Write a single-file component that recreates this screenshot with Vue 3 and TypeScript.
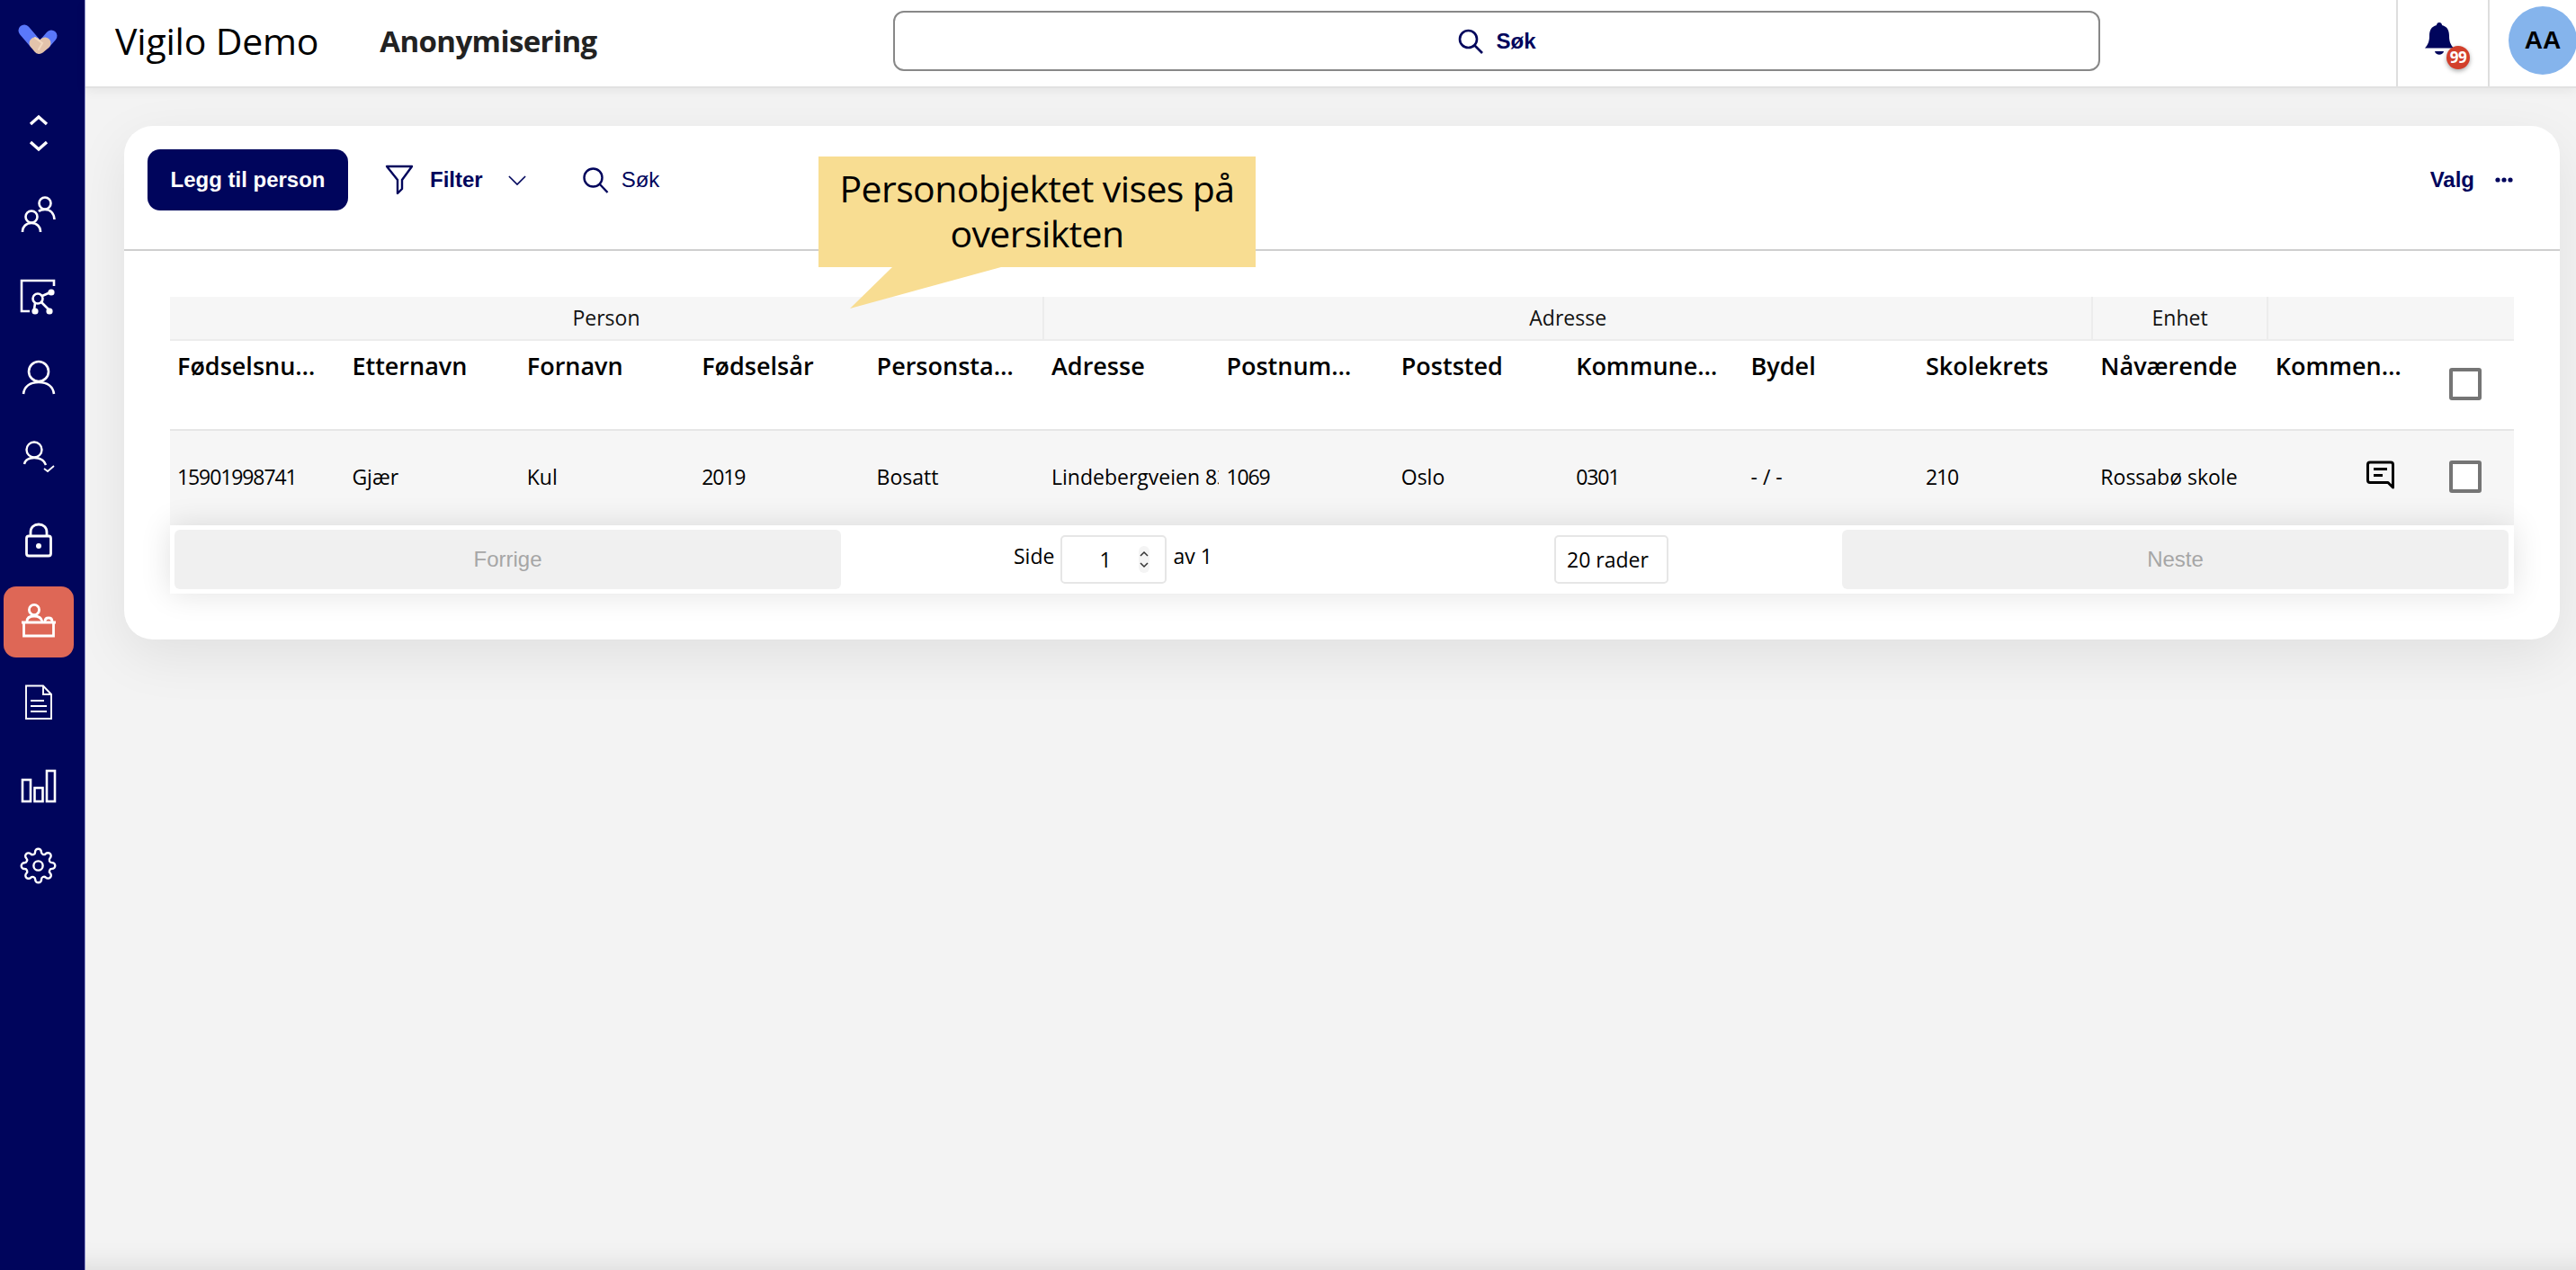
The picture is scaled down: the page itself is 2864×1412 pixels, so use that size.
<script setup lang="ts">
const groups = [
  { label: 'Person', span: 5 },
  { label: 'Adresse', span: 6 },
  { label: 'Enhet', span: 1 },
  { label: '', span: 2 },
]

const columns = [
  'Fødselsnummer',
  'Etternavn',
  'Fornavn',
  'Fødselsår',
  'Personstatus',
  'Adresse',
  'Postnummer',
  'Poststed',
  'Kommunenummer',
  'Bydel',
  'Skolekrets',
  'Nåværende',
  'Kommentar',
]

const row = [
  '15901998741',
  'Gjær',
  'Kul',
  '2019',
  'Bosatt',
  'Lindebergveien 83',
  '1069',
  'Oslo',
  '0301',
  '- / -',
  '210',
  'Rossabø skole',
]

const isNumber = (v: string) => /^\d+$/.test(v)
</script>

<template>
  <div class="page">
    <aside class="sidebar">
      <div class="logo">
        <svg width="48" height="40" viewBox="0 0 48 40" fill="none" stroke-linecap="round">
          <path d="M8 8 L20 22" stroke="#5a78fa" stroke-width="13" />
          <path d="M38 14 L31 22" stroke="#5a78fa" stroke-width="13" />
          <path d="M20 22 L24.500 27.500 L31 22" stroke="#e3c3ab" stroke-width="13" stroke-linejoin="round" />
          <path d="M20 16 L28 22 L24 29" stroke="#f3d9c0" stroke-width="2" />
        </svg>
      </div>
      <div class="updown">
        <svg width="24" height="42" viewBox="0 0 24 42" fill="none" stroke="#fff" stroke-width="3.4">
          <path d="M3 11 L12 3 L21 11" />
          <path d="M3 31 L12 39 L21 31" />
        </svg>
      </div>
      <nav class="menu">
        <a class="item">
          <svg viewBox="0 0 44 44" fill="none" stroke="#fff" stroke-width="2.6">
            <circle cx="29" cy="9" r="6.5" />
            <path d="M22 18 C24 16 26 16 29 16 C35 16 39 20 39.5 27" />
            <circle cx="14" cy="24" r="6.5" />
            <path d="M4 41 C4 35 8 31 14 31 C20 31 24 35 24 41" />
          </svg>
        </a>
        <a class="item">
          <svg viewBox="0 0 44 44" fill="none" stroke="#fff" stroke-width="2.6">
            <path d="M39 10 V4 H3 V38 H12" />
            <circle cx="21" cy="24" r="5.5" />
            <path d="M26 21 L35 17 M18 29 L17 36 M25 28 L33 36" />
            <g fill="#fff" stroke="none">
              <circle cx="36" cy="17" r="3.6" />
              <circle cx="18" cy="38" r="3.6" />
              <circle cx="34" cy="38" r="3.6" />
            </g>
          </svg>
        </a>
        <a class="item">
          <svg viewBox="0 0 44 44" fill="none" stroke="#fff" stroke-width="2.6">
            <circle cx="22" cy="15" r="11" />
            <path d="M5 40 C6 32 12 27 22 27 C32 27 38 32 39 40" />
          </svg>
        </a>
        <a class="item">
          <svg viewBox="0 0 44 44" fill="none" stroke="#fff" stroke-width="2.4">
            <circle cx="17" cy="12" r="8.5" />
            <path d="M6 28 C7 23 11 21 17 21 C23 21 28 23 30 29" />
            <path d="M28 33 L32 36 L39 30" stroke-width="1.8" />
          </svg>
        </a>
        <a class="item">
          <svg viewBox="0 0 44 44" fill="none" stroke="#fff" stroke-width="2.8">
            <rect x="8.5" y="17" width="27" height="22" rx="2.5" />
            <path d="M13 17 V13 C13 7 17 4 22 4 C27 4 31 7 31 13 V17" />
            <circle cx="22" cy="28" r="3" fill="#fff" stroke="none" />
          </svg>
        </a>
        <a class="item active">
          <svg viewBox="0 0 44 44" fill="none" stroke="#fff" stroke-width="2.8">
            <circle cx="17" cy="9" r="5.6" />
            <path d="M9 22 C9 18 12 16 17 16 C22 16 25 18 26 22" />
            <path d="M29 22 C29 19 31 18 33 18 C35 18 37 19 37 22" />
            <path d="M3 23 H41" />
            <path d="M5.500 23 V38 H38.500 V23" />
          </svg>
        </a>
        <a class="item">
          <svg viewBox="0 0 44 44" fill="none" stroke="#fff" stroke-width="1.9">
            <path d="M8 3.500 H27 L36 13 V40 H8 Z" />
            <path d="M27 3.500 V13 H36" />
            <path d="M13 20 H28 M13 26 H31 M13 32 H31" />
          </svg>
        </a>
        <a class="item">
          <svg viewBox="0 0 44 44" fill="none" stroke="#fff" stroke-width="2.6">
            <rect x="4" y="17" width="9" height="24" />
            <rect x="17.500" y="26" width="9" height="15" />
            <rect x="31" y="7" width="9" height="34" />
          </svg>
        </a>
        <a class="item">
          <svg viewBox="0 0 24 24" fill="none" stroke="#fff" stroke-width="1.4" class="gear">
            <circle cx="12" cy="12" r="3" />
            <path
              d="M19.400 15a1.650 1.650 0 0 0 .33 1.820l.06.06a2 2 0 0 1 0 2.830 2 2 0 0 1-2.830 0l-.06-.06a1.650 1.650 0 0 0-1.820-.33 1.650 1.650 0 0 0-1 1.510V21a2 2 0 0 1-2 2 2 2 0 0 1-2-2v-.09A1.650 1.650 0 0 0 9 19.400a1.650 1.650 0 0 0-1.820.33l-.06.06a2 2 0 0 1-2.830 0 2 2 0 0 1 0-2.830l.06-.06a1.650 1.650 0 0 0 .33-1.820 1.650 1.650 0 0 0-1.510-1H3a2 2 0 0 1-2-2 2 2 0 0 1 2-2h.09A1.650 1.650 0 0 0 4.600 9a1.650 1.650 0 0 0-.33-1.820l-.06-.06a2 2 0 0 1 0-2.830 2 2 0 0 1 2.830 0l.06.06a1.650 1.650 0 0 0 1.820.33H9a1.650 1.650 0 0 0 1-1.510V3a2 2 0 0 1 2-2 2 2 0 0 1 2 2v.09a1.650 1.650 0 0 0 1 1.510 1.650 1.650 0 0 0 1.820-.33l.06-.06a2 2 0 0 1 2.830 0 2 2 0 0 1 0 2.830l-.06.06a1.650 1.650 0 0 0-.33 1.820V9a1.650 1.650 0 0 0 1.510 1H21a2 2 0 0 1 2 2 2 2 0 0 1-2 2h-.09a1.650 1.650 0 0 0-1.510 1z"
            />
          </svg>
        </a>
      </nav>
    </aside>

    <div class="main">
      <header class="topbar">
        <div class="titles">
          <span class="brand">Vigilo Demo</span>
          <span class="section">Anonymisering</span>
        </div>
        <button class="global-search">
          <svg width="30" height="30" viewBox="0 0 30 30" fill="none" stroke="#00055c" stroke-width="2.6">
            <circle cx="12.500" cy="12.500" r="9.500" />
            <path d="M19.500 19.500 L28 28" />
          </svg>
          <span>Søk</span>
        </button>
        <div class="bell-cell">
          <div class="bell">
            <svg width="34" height="40" viewBox="0 0 34 40" fill="#00055c">
              <path d="M17 1 C19 1 20 2.500 20 4 C26 5.500 28 10 28 16 C28 23 30 26 33 29.500 H1 C4 26 6 23 6 16 C6 10 8 5.500 14 4 C14 2.500 15 1 17 1 Z" />
              <path d="M12 33 H22 C21 38 13 38 12 33 Z" />
            </svg>
            <span class="badge">99</span>
          </div>
        </div>
        <div class="avatar-cell">
          <span class="avatar">AA</span>
        </div>
      </header>

      <main class="content">
        <section class="card">
          <div class="toolbar">
            <button class="add">Legg til person</button>
            <button class="tool filter">
              <svg width="32" height="34" viewBox="0 0 32 34" fill="none" stroke="#00055c" stroke-width="2.4" stroke-linejoin="round">
                <path d="M2 2 H30 L19 17 V27 L14 32 V17 Z" />
              </svg>
              <strong>Filter</strong>
              <svg class="chev" width="20" height="11" viewBox="0 0 22 12" fill="none" stroke="#00055c" stroke-width="1.8">
                <path d="M1 1 L11 11 L21 1" />
              </svg>
            </button>
            <button class="tool find">
              <svg width="30" height="30" viewBox="0 0 30 30" fill="none" stroke="#00055c" stroke-width="2.4">
                <circle cx="12.500" cy="12.500" r="10" />
                <path d="M19.500 19.500 L28.500 29" />
              </svg>
              <span>Søk</span>
            </button>
            <button class="tool options">
              <strong>Valg</strong>
              <svg width="20" height="6" viewBox="0 0 20 6" fill="#00055c">
                <circle cx="3" cy="3" r="2.600" />
                <circle cx="10" cy="3" r="2.600" />
                <circle cx="17" cy="3" r="2.600" />
              </svg>
            </button>
          </div>

          <div class="table-wrap">
            <table class="grid">
              <colgroup>
                <col v-for="c in columns" :key="c" class="col" />
                <col class="col-check" />
              </colgroup>
              <thead>
                <tr class="group-row">
                  <th v-for="g in groups" :key="g.label" :colspan="g.span">{{ g.label }}</th>
                </tr>
                <tr class="head-row">
                  <th v-for="c in columns" :key="c"><span class="ellipsis">{{ c }}</span></th>
                  <th class="check-cell"><span class="check" /></th>
                </tr>
              </thead>
              <tbody>
                <tr class="data-row">
                  <td v-for="(v, i) in row" :key="i" :class="{ num: isNumber(v) }">{{ v }}</td>
                  <td class="comment-cell">
                    <svg width="32" height="32" viewBox="0 0 32 32" fill="none" stroke="#000" stroke-width="3">
                      <path d="M4 2 H27 Q29.500 2 29.500 4.500 V30 L24 24.500 H4 Q1.500 24.500 1.500 22 V4.500 Q1.500 2 4 2 Z" stroke-linejoin="round" />
                      <path d="M8 9.500 H23 M8 16.500 H18" />
                    </svg>
                  </td>
                  <td class="check-cell"><span class="check" /></td>
                </tr>
              </tbody>
            </table>

            <div class="pager">
              <button class="page-btn">Forrige</button>
              <div class="page-center">
                <span class="page-info">
                  <span class="page-label">Side</span>
                  <span class="page-input">
                    <span>1</span>
                    <span class="spin">
                      <svg width="12" height="26" viewBox="0 0 12 26" fill="none" stroke="#333" stroke-width="1.5">
                        <path d="M2 9 L6 5 L10 9" />
                        <path d="M2 17 L6 21 L10 17" />
                      </svg>
                    </span>
                  </span>
                  <span class="page-label">av 1</span>
                </span>
                <span class="page-size">20 rader</span>
              </div>
              <button class="page-btn">Neste</button>
            </div>
          </div>
        </section>
      </main>

      <div class="callout">
        <p>Personobjektet vises på oversikten</p>
        <svg class="tail" width="170" height="46" viewBox="0 0 170 46">
          <polygon points="47,0 0,46 168,0" fill="#f8dd92" />
        </svg>
      </div>
    </div>
  </div>
</template>

<style>
html,
body {
  margin: 0;
  background: #f3f3f3;
}
</style>

<style scoped>
.page {
  display: flex;
  width: 2864px;
  height: 1412px;
  overflow: hidden;
  font-family: 'Open Sans', 'Noto Sans', sans-serif;
  color: #000;
}

button {
  border: 0;
  background: none;
  padding: 0;
  cursor: pointer;
  font-family: 'Liberation Sans', Arial, sans-serif;
  font-size: 24px;
  color: #00055c;
}

.sidebar {
  flex: 0 0 95px;
  box-sizing: border-box;
  padding-right: 9px;
  display: flex;
  flex-direction: column;
  align-items: center;
  background: #00055c;
  border-right: 1px solid #8f92c8;
}

.logo {
  height: 40px;
  margin-top: 26px;
}

.updown {
  height: 42px;
  margin-top: 61px;
}

.logo svg,
.updown svg {
  display: block;
}

.menu {
  margin-top: 25px;
  display: flex;
  flex-direction: column;
  align-items: center;
}

.item {
  width: 78px;
  height: 79px;
  margin: 5.7px 0;
  display: flex;
  align-items: center;
  justify-content: center;
  border-radius: 14px;
}

.item svg {
  width: 44px;
  height: 44px;
}

.item svg.gear {
  width: 41px;
  height: 41px;
}

.item.active {
  background: #de6756;
}

.main {
  flex: 1;
  min-width: 0;
  position: relative;
  display: flex;
  flex-direction: column;
  box-shadow: inset 0 -34px 30px -30px rgba(0, 0, 0, 0.1);
}

.topbar {
  position: relative;
  z-index: 1;
  flex: 0 0 98px;
  box-sizing: border-box;
  display: flex;
  align-items: stretch;
  background: #fff;
  border-bottom: 2px solid #e2e2e2;
  box-shadow: 0 3px 12px rgba(0, 0, 0, 0.06);
}

.titles {
  flex: 0 0 898px;
  box-sizing: border-box;
  padding-left: 33px;
  padding-bottom: 5px;
  display: flex;
  align-items: center;
  gap: 68px;
}

.brand {
  font-size: 41px;
  line-height: 1;
  letter-spacing: -0.2px;
}

.section {
  font-size: 33px;
  font-weight: 700;
  line-height: 1;
  color: #222;
  letter-spacing: -0.6px;
}

.global-search {
  flex: 0 0 1342px;
  height: 67px;
  margin-top: 12px;
  box-sizing: border-box;
  display: flex;
  align-items: center;
  justify-content: center;
  gap: 13px;
  background: #fff;
  border: 2px solid #888;
  border-radius: 12px;
  font-weight: bold;
}

.bell-cell {
  margin-left: auto;
  width: 102px;
  box-sizing: border-box;
  border-left: 2px solid #dedede;
  display: flex;
  align-items: flex-start;
  padding: 24px 0 0 29px;
}

.bell {
  position: relative;
  width: 34px;
  height: 40px;
}

.bell svg {
  display: block;
}

.badge {
  position: absolute;
  left: 25px;
  top: 27px;
  width: 26px;
  height: 26px;
  border-radius: 50%;
  background: #d23f2b;
  color: #fff;
  font-size: 17px;
  font-weight: 700;
  line-height: 26px;
  text-align: center;
  letter-spacing: -0.5px;
  box-shadow: 0 2px 5px rgba(0, 0, 0, 0.35);
}

.avatar-cell {
  flex: 0 0 98px;
  box-sizing: border-box;
  border-left: 2px solid #dedede;
  padding: 7px 0 0 21px;
  overflow: hidden;
}

.avatar {
  display: block;
  width: 76px;
  height: 76px;
  border-radius: 50%;
  background: #85b4ec;
  font-family: 'Liberation Sans', Arial, sans-serif;
  font-size: 28px;
  font-weight: bold;
  line-height: 76px;
  text-align: center;
}

.content {
  flex: 1;
  padding: 42px 18px 0 43px;
}

.card {
  height: 571px;
  box-sizing: border-box;
  background: #fff;
  border-radius: 32px;
  box-shadow: 0 18px 60px rgba(0, 0, 0, 0.08);
}

.toolbar {
  height: 139px;
  box-sizing: border-box;
  padding: 26px 52px 0 26px;
  display: flex;
  align-items: flex-start;
  border-bottom: 2px solid #cfcfcf;
}

.add {
  width: 223px;
  height: 68px;
  background: #00055c;
  border-radius: 14px;
  color: #fff;
  font-weight: bold;
}

.tool {
  display: flex;
  align-items: center;
  height: 68px;
}

.filter {
  margin-left: 41px;
  gap: 18px;
}

.chev {
  margin-left: 10px;
}

.find {
  margin-left: 62px;
  gap: 14px;
}

.options {
  margin-left: auto;
  gap: 23px;
}

.table-wrap {
  margin: 51px 51px 0;
}

.grid {
  width: 2606px;
  table-layout: fixed;
  border-collapse: separate;
  border-spacing: 0;
}

.col {
  width: 194.4px;
}

.col-check {
  width: 79px;
}

.group-row th {
  height: 49px;
  box-sizing: border-box;
  padding: 0 0 2px;
  background: #f6f6f6;
  border-bottom: 2px solid #ececec;
  border-right: 2px solid #ececec;
  font-size: 23px;
  font-weight: 400;
  color: #111;
}

.group-row th:last-child {
  border-right: 0;
}

.head-row th {
  height: 100px;
  box-sizing: border-box;
  padding: 9px 30px 0 8px;
  vertical-align: top;
  text-align: left;
  border-bottom: 2px solid #e6e6e6;
  font-size: 27px;
  font-weight: 600;
  line-height: 38px;
}

/* The long column titles get cut at different points */
.head-row th:nth-child(9) {
  padding-right: 24px;
}

.head-row th:nth-child(13) {
  padding-right: 40px;
}

.ellipsis {
  display: block;
  overflow: hidden;
  white-space: nowrap;
  text-overflow: ellipsis;
}

.head-row th.check-cell {
  padding: 30px 0 0 0;
}

.check {
  display: block;
  width: 36px;
  height: 36px;
  box-sizing: border-box;
  margin-left: 7px;
  background: #fff;
  border: 4px solid #757575;
  border-radius: 3px;
}

.data-row td {
  height: 105px;
  box-sizing: border-box;
  padding: 0 0 4px 8px;
  background: #f6f6f6;
  font-size: 23px;
  overflow: hidden;
  white-space: nowrap;
}

.data-row td.num {
  letter-spacing: -1.1px;
}

.data-row td.comment-cell {
  padding: 0 0 8px 109px;
}

.comment-cell svg {
  display: block;
}

.data-row td.check-cell {
  padding: 0 0 3px;
}

.pager {
  position: relative;
  display: flex;
  align-items: center;
  justify-content: space-between;
  height: 76px;
  box-sizing: border-box;
  padding: 0 6px 0 5px;
  background: #fff;
  box-shadow: 0 0 34px rgba(0, 0, 0, 0.12);
}

.page-btn {
  flex: 0 0 741px;
  height: 66px;
  background: #f0f0f0;
  border-radius: 6px;
  color: #a6a6a6;
}

.page-center {
  flex: 1;
  position: relative;
  display: flex;
  align-items: center;
  justify-content: space-between;
  padding: 0 193px 0 192px;
  font-size: 23px;
}

.page-info {
  display: flex;
  align-items: center;
  gap: 7px;
}

.page-label {
  margin-bottom: 9px;
}

.page-input {
  display: flex;
  align-items: center;
  justify-content: space-between;
  width: 118px;
  height: 54px;
  box-sizing: border-box;
  padding-left: 41px;
  padding-right: 17px;
  border: 2px solid #e6e6e6;
  border-radius: 5px;
  background: #fff;
}

.spin {
  display: flex;
  height: 30px;
  align-items: center;
  border-radius: 7px;
  background: #f4f4f4;
}

.page-size {
  width: 127px;
  height: 54px;
  box-sizing: border-box;
  padding-left: 12px;
  border: 2px solid #e6e6e6;
  border-radius: 5px;
  line-height: 50px;
}

.callout {
  position: absolute;
  left: 815px;
  top: 174px;
  width: 486px;
  height: 123px;
  z-index: 2;
  background: #f8dd92;
  text-align: center;
}

.callout p {
  margin: 0;
  padding: 10px 20px 0;
  font-size: 41px;
  line-height: 50px;
  letter-spacing: -0.6px;
}

.tail {
  position: absolute;
  left: 35px;
  top: 123px;
}
</style>
